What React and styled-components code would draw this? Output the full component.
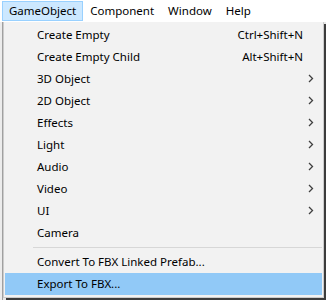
import React from "react";
import styled, { createGlobalStyle } from "styled-components";

const items = [
  { label: "Create Empty", shortcut: "Ctrl+Shift+N" },
  { label: "Create Empty Child", shortcut: "Alt+Shift+N" },
  { label: "3D Object", sub: true },
  { label: "2D Object", sub: true },
  { label: "Effects", sub: true },
  { label: "Light", sub: true },
  { label: "Audio", sub: true },
  { label: "Video", sub: true },
  { label: "UI", sub: true },
  { label: "Camera" },
  { separator: true },
  { label: "Convert To FBX Linked Prefab..." },
  { label: "Export To FBX...", active: true },
];

const Chevron = () => (
  <svg width="6" height="9" viewBox="0 0 6 9">
    <path d="M1 1 L4.5 4.5 L1 8" fill="none" stroke="#404040" strokeWidth="1.3" />
  </svg>
);

const App = () => (
  <Page>
    <GlobalStyle />
    <MenuBar>
      <MenuTitle $open>GameObject</MenuTitle>
      <MenuTitle>Component</MenuTitle>
      <MenuTitle>Window</MenuTitle>
      <MenuTitle>Help</MenuTitle>
    </MenuBar>
    <Body>
      <Backdrop />
      <Dropdown>
        {items.map((it, i) =>
          it.separator ? (
            <Separator key={i} />
          ) : (
            <Item key={i} $active={it.active}>
              <Label>{it.label}</Label>
              {it.shortcut && <Shortcut>{it.shortcut}</Shortcut>}
              <Arrow>{it.sub && <Chevron />}</Arrow>
            </Item>
          )
        )}
      </Dropdown>
    </Body>
  </Page>
);

const GlobalStyle = createGlobalStyle`
  body {
    margin: 0;
    font-family: "Noto Sans", "Open Sans", sans-serif;
    font-size: 11.5px;
    color: #000;
    background: #f0f0f0;
  }
`;

const Page = styled.div`
  width: 326px;
  height: 300px;
  overflow: hidden;
  display: flex;
  flex-direction: column;
`;

const MenuBar = styled.div`
  height: 22px;
  background: #fff;
  display: flex;
  align-items: flex-start;
  padding-left: 2px;
`;

const MenuTitle = styled.div`
  height: 18px;
  margin-top: 1px;
  padding: 0 6px;
  line-height: 18px;
  border: 1px solid ${(p) => (p.$open ? "#99d1ff" : "transparent")};
  background: ${(p) => (p.$open ? "#cce8ff" : "transparent")};
  margin-right: 0;
`;

const Body = styled.div`
  flex: 1;
  display: flex;
  background: #e8e8e8;
`;

const Backdrop = styled.div`
  width: 2px;
  border-right: 1px solid #a0a0a0;
  background: #ececec;
`;

const Dropdown = styled.div`
  width: 317px;
  background: #f2f2f2;
  border: 1px solid #cccccc;
  border-top: none;
  padding: 2px 1px;
  box-shadow: 3px 2px 0 #3c3c3c;
  align-self: flex-start;
`;

const Item = styled.div`
  height: 22px;
  box-sizing: border-box;
  padding-bottom: 1px;
  display: flex;
  align-items: center;
  padding-left: 32px;
  background: ${(p) => (p.$active ? "#91c9f7" : "transparent")};
`;

const Label = styled.span`
  flex: 1;
  white-space: nowrap;
`;

const Shortcut = styled.span`
  white-space: nowrap;
`;

const Arrow = styled.span`
  width: 14px;
  padding-left: 5px;
  display: flex;
  align-items: center;
`;

const Separator = styled.div`
  height: 7px;
  margin-left: 28px;
  display: flex;
  align-items: center;
  &::after {
    content: "";
    flex: 1;
    height: 1px;
    background: #d7d7d7;
  }
`;

export default App;
